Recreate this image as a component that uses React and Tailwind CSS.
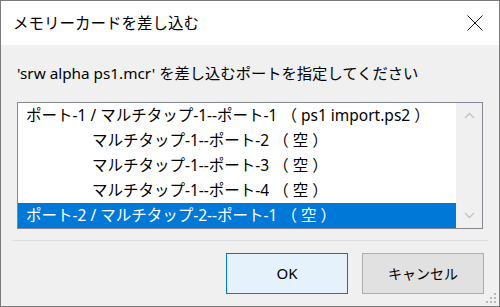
import React from 'react';

const FONT = { fontFamily: '"Noto Sans", "Noto Sans CJK JP", sans-serif' };

const rows = [
  { label: 'ポート-1 / マルチタップ-1--ポート-1 （ ps1 import.ps2 ）', indent: false },
  { label: 'マルチタップ-1--ポート-2 （ 空 ）', indent: true },
  { label: 'マルチタップ-1--ポート-3 （ 空 ）', indent: true },
  { label: 'マルチタップ-1--ポート-4 （ 空 ）', indent: true },
  { label: 'ポート-2 / マルチタップ-2--ポート-1 （ 空 ）', indent: false, selected: true },
];

const Chevron = ({ up }) => (
  <svg width="11" height="7" viewBox="0 0 11 7" fill="none">
    <path
      d={up ? 'M1 6 L5.5 1.5 L10 6' : 'M1 1 L5.5 5.5 L10 1'}
      stroke="#c2c2c2"
      strokeWidth="1.3"
    />
  </svg>
);

export default function App() {
  return (
    <div
      className="relative w-[500px] h-[307px] box-border border border-[#7a7a7a] bg-[#f0f0f0] flex flex-col text-black overflow-hidden"
      style={FONT}
    >
      {/* Title bar */}
      <div className="h-[44px] bg-white flex items-center justify-between pl-[12px] pr-[16px] shrink-0">
        <span className="text-[15.5px] leading-[20px]">メモリーカードを差し込む</span>
        <svg width="16" height="16" viewBox="0 0 16 16">
          <path d="M0.5 0.5 L15.5 15.5 M15.5 0.5 L0.5 15.5" stroke="#111" strokeWidth="1" />
        </svg>
      </div>

      {/* Message */}
      <div className="mt-[18px] pl-[16px] h-[20px] text-[15.3px] leading-[20px] whitespace-nowrap">
        'srw alpha ps1.mcr' を差し込むポートを指定してください
      </div>

      {/* List box */}
      <div className="mt-[19px] ml-[16px] w-[466px] h-[127px] box-border border border-[#828790] bg-white flex">
        <div className="flex-1 flex flex-col">
          {rows.map((r, i) => (
            <div
              key={i}
              className={`h-[25px] flex items-center text-[15.5px] whitespace-nowrap ${
                r.indent ? 'pl-[74px]' : 'pl-[8px]'
              } ${r.selected ? 'bg-[#0078d7] text-white' : ''}`}
            >
              {r.label}
            </div>
          ))}
        </div>
        <div className="w-[26px] bg-[#f0f0f0] flex flex-col items-center justify-between py-[9px]">
          <Chevron up />
          <Chevron />
        </div>
      </div>

      {/* Separator */}
      <div className="mt-[11px] ml-[11px] w-[476px] h-px bg-[#dcdcdc]" />

      {/* Buttons */}
      <div className="mt-[12px] flex justify-end gap-[14px] pr-[15px]">
        <button className="w-[122px] h-[41px] box-border border border-[#0078d7] bg-[#e5f1fb] text-[15px]">
          OK
        </button>
        <button className="w-[122px] h-[41px] box-border border border-[#adadad] bg-[#e1e1e1] text-[14px]">
          キャンセル
        </button>
      </div>

      {/* Resize grip */}
      <svg className="absolute right-[2px] bottom-[2px]" width="12" height="12" viewBox="0 0 12 12">
        {[
          [9, 1], [9, 5], [5, 5], [9, 9], [5, 9], [1, 9],
        ].map(([x, y], i) => (
          <rect key={i} x={x} y={y} width="2" height="2" fill="#b8b8b8" />
        ))}
      </svg>
    </div>
  );
}
